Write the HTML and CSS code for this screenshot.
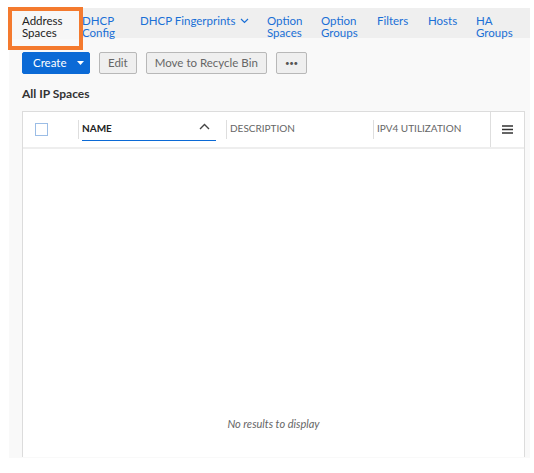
FILE: index.html
```html
<!DOCTYPE html>
<html>
<head>
<meta charset="utf-8">
<link rel="stylesheet" href="styles.css">
</head>
<body>
<div class="panel">
  <div class="tabs">
    <div class="tab active">Address<br>Spaces</div>
    <div class="tab">DHCP<br>Config</div>
    <div class="tab">DHCP Fingerprints <svg class="chev" width="9" height="6" viewBox="0 0 9 6"><path d="M1 1l3.5 3.5L8 1" fill="none" stroke="#1a6fd6" stroke-width="1.2"/></svg></div>
    <div class="tab">Option<br>Spaces</div>
    <div class="tab">Option<br>Groups</div>
    <div class="tab">Filters</div>
    <div class="tab">Hosts</div>
    <div class="tab">HA<br>Groups</div>
  </div>
  <div class="highlight"></div>
  <div class="content">
    <div class="toolbar">
      <button class="btn primary">Create <svg class="caret" width="7" height="4" viewBox="0 0 7 4"><path d="M0 0h7L3.5 4z" fill="#fff"/></svg></button>
      <button class="btn">Edit</button>
      <button class="btn">Move to Recycle Bin</button>
      <button class="btn more">•••</button>
    </div>
    <div class="title">All IP Spaces</div>
    <div class="table">
      <div class="thead">
        <div class="col c-check"><span class="checkbox"></span></div>
        <div class="col c-name"><span class="sep"></span><span class="name">NAME</span><svg class="sort" width="11" height="7" viewBox="0 0 11 7"><path d="M1 6l4.5-4.5L10 6" fill="none" stroke="#444" stroke-width="1.4"/></svg></div>
        <div class="col c-desc"><span class="sep"></span>DESCRIPTION</div>
        <div class="col c-ipv4"><span class="sep"></span>IPV4 UTILIZATION</div>
        <div class="col c-menu"><svg width="11" height="9" viewBox="0 0 11 9"><path d="M0 1h11M0 4.5h11M0 8h11" stroke="#333" stroke-width="1.5"/></svg></div>
      </div>
      <div class="tbody">
        <div class="empty">No results to display</div>
      </div>
    </div>
  </div>
</div>
</body>
</html>
```
FILE: styles.css
```css
* { box-sizing: border-box; }
body {
  margin: 0;
  background: #ffffff;
  font-family: Lato, "Noto Sans", sans-serif;
}
.panel {
  position: relative;
  margin: 8px 0 0 9px;
  width: 521px;
  height: 450px;
  background: #f9f9f9;
}
.tabs {
  display: grid;
  grid-template-columns: 73px 58px 127px 54px 56px 51px 48px 54px;
  height: 30px;
  background: #efefef;
}
.tab {
  padding: 7px 0 0 0;
  font-size: 11.5px;
  line-height: 12px;
  color: #1a6fd6;
  white-space: nowrap;
}
.tab.active {
  color: #222;
  padding-left: 13px;
  background: #f7f7f7;
}
.chev { margin-left: 2px; vertical-align: 1px; }
.highlight {
  position: absolute;
  left: -1px;
  top: -1px;
  width: 75px;
  height: 43px;
  border: 4px solid #f47a2e;
}
.content {
  padding: 15px 6px 0 13px;
}
.toolbar {
  display: flex;
  gap: 9px;
  height: 21px;
  margin-top: -1px;
}
.btn {
  font-family: Lato, "Noto Sans", sans-serif;
  font-size: 11.5px;
  height: 22px;
  padding: 0 8px;
  border: 1px solid #b8b8b8;
  border-radius: 2px;
  background: #efefef;
  color: #666;
  line-height: 20px;
}
.btn.primary {
  width: 68px;
  background: #0b6ad6;
  border-color: #0b6ad6;
  color: #fff;
  padding: 0 0 0 10px;
  text-align: left;
}
.caret { margin-left: 8px; vertical-align: 2px; }
.btn.more {
  width: 31px;
  padding: 0;
  font-size: 8px;
  color: #555;
  letter-spacing: -0.5px;
}
.title {
  margin-top: 14px;
  font-size: 12px;
  font-weight: 700;
  color: #333;
  line-height: 14px;
}
.table {
  margin-top: 10px;
  width: 503px;
  height: 346px;
  background: #fff;
  border: 1px solid #dcdcdc;
  border-bottom: none;
  display: flex;
  flex-direction: column;
}
.thead {
  display: grid;
  grid-template-columns: 55px 148px 147px 117px 1fr;
  height: 37px;
  border-bottom: 2px solid #eeeeee;
  font-size: 10px;
  color: #666;
}
.col {
  position: relative;
  display: flex;
  align-items: center;
  padding-left: 4px;
  padding-bottom: 3px;
  height: 35px;
}
.sep {
  position: absolute;
  left: 0;
  top: 8px;
  height: 19px;
  border-left: 1px solid #dedede;
}
.c-check { padding-left: 12px; padding-bottom: 0; }
.checkbox {
  width: 13px;
  height: 13px;
  border: 1px solid #9bbde6;
  background: #fff;
}
.c-name {
  color: #222;
  font-weight: 700;
}
.c-name::after {
  content: "";
  position: absolute;
  left: 4px;
  width: 134px;
  bottom: 6px;
  border-bottom: 1.5px solid #0b6ad6;
}
.name { flex: 1; }
.sort { margin-right: 16px; margin-top: -3px; }
.c-menu {
  border-left: 1px solid #dedede;
  justify-content: center;
  padding-left: 0;
  padding-bottom: 0;
}
.tbody {
  flex: 1;
  display: flex;
  align-items: flex-end;
  justify-content: center;
  padding-bottom: 27px;
}
.empty {
  font-size: 11px;
  font-style: italic;
  color: #666;
}
```
